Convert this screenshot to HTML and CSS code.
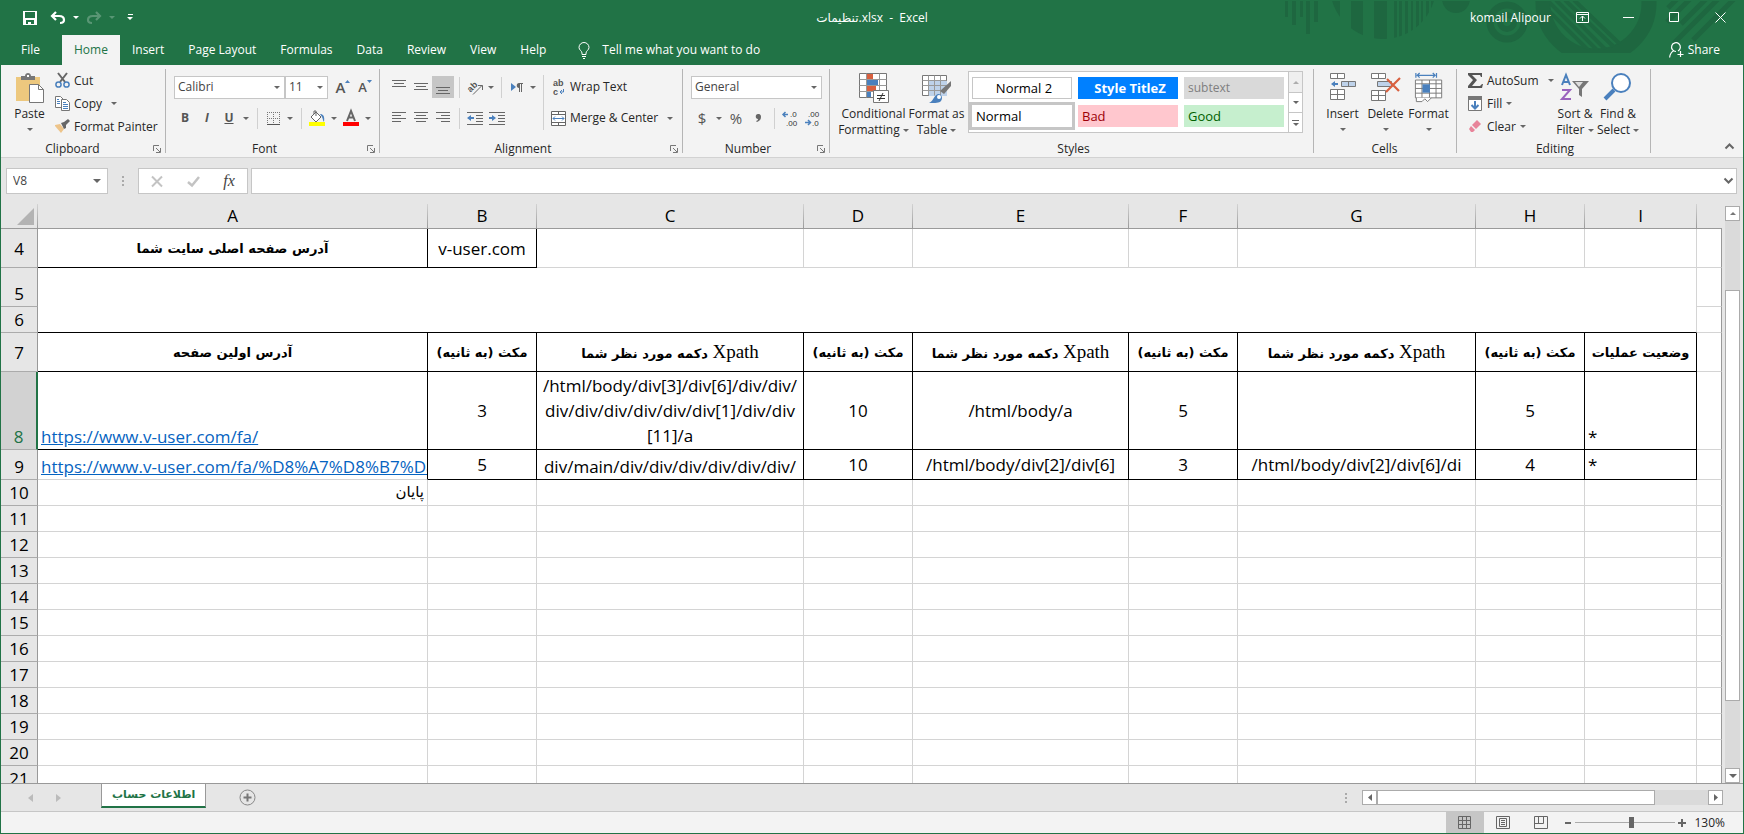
FILE: index.html
```
<!DOCTYPE html>
<html lang="en">

<head>
    <meta charset="UTF-8">
    <meta name="viewport" content="width=device-width, initial-scale=1.0">
    <title>تنظیمات.xlsx - Excel</title>
    <link rel="stylesheet" href="styles.css">
</head>

<body>
    <header class="top">
        <!-- Decorative pattern behind the window buttons -->
        <svg class="pattern" width="474" height="65" viewBox="0 0 474 65">
            <defs>
                <clipPath id="disc"><circle cx="113" cy="-14" r="53"/></clipPath>
                <clipPath id="bowl"><circle cx="326" cy="3" r="47"/></clipPath>
                <clipPath id="cut"><rect y="1" width="474" height="52"/></clipPath>
            </defs>
            <g clip-path="url(#cut)">
                <path d="M15 1h3v16h-3zM22 1h4v24h-4zM30 1h3v16h-3zM36 1h4v33h-4zM44 1h4v21h-4z"/>
                <path clip-path="url(#disc)" d="M56 0h14v40H56zM81 0h12v40H81zM104 0h13v40h-13zM124 0h3v40h-3zM129 0h3v40h-3zM135 0h3v40h-3zM141 0h2v40h-2zM146 0h3v40h-3zM151 0h2v40h-2zM156 0h3v40h-3zM161 0h3v40h-3z"/>
                <circle cx="186" cy="-1" r="14"/>
                <circle class="ring" cx="237" cy="22" r="17" stroke-width="7"/>
                <circle class="ring" cx="237" cy="22" r="7" stroke-width="6"/>
                <circle class="ring" cx="326" cy="3" r="53" stroke-width="15"/>
                <g clip-path="url(#bowl)" class="ring" stroke-width="4">
                    <path d="M268 0l60 60M277 0l60 60M286 0l56 56M295 0l52 50M304 0l50 48"/>
                </g>
                <path class="ring" stroke-width="5" d="M398 8l9-9M397 22l23-23M411 24l25-25M404 43l44-44M423 40l42-42"/>
            </g>
        </svg>

        <div class="titlebar">
            <div class="quick">
                <button class="qbtn" aria-label="Save"><svg width="14" height="14" viewBox="0 0 14 14"><path fill="#fff" fill-rule="evenodd" d="M0 0h14v14H0zM2 1v6h10V1zM3 9v4h2v-2h3v2h3V9z"/></svg></button>
                <button class="qbtn" aria-label="Undo"><svg width="16" height="13" viewBox="0 0 16 13"><path fill="none" stroke="#fff" stroke-width="2.200" d="M6 1L2 5l4 4M2 5h7c4 0 5 2 5 4s-2 3-4 3"/></svg></button>
                <button class="qcaret" aria-label="Undo list"><i class="caret white"></i></button>
                <button class="qbtn dim" aria-label="Redo"><svg width="16" height="13" viewBox="0 0 16 13"><path fill="none" stroke="#fff" stroke-width="2.200" d="M10 1l4 4-4 4M14 5H7C3 5 2 7 2 9s2 3 4 3"/></svg></button>
                <button class="qcaret dim" aria-label="Redo list"><i class="caret white"></i></button>
                <button class="qbtn" aria-label="Customize toolbar"><svg width="7" height="7" viewBox="0 0 7 7"><path fill="#fff" d="M1 0h5v1H1zM0 3h6L3 6z"/></svg></button>
            </div>
            <div class="doc-title">تنظیمات.xlsx&nbsp; -&nbsp; Excel</div>
            <div class="window">
                <span class="user">komail Alipour</span>
                <button aria-label="Ribbon display options"><svg width="13" height="11" viewBox="0 0 13 11"><path fill="none" stroke="#fff" d="M.5.5h12v10H.5zM.5 2.500h12M6.500 9V4M4 6.500L6.500 4 9 6.500"/></svg></button>
                <button aria-label="Minimize"><svg width="11" height="11" viewBox="0 0 11 11"><path stroke="#fff" d="M0 5.500h11"/></svg></button>
                <button aria-label="Maximize"><svg width="11" height="11" viewBox="0 0 11 11"><path fill="none" stroke="#fff" d="M.5.5h9v9h-9z"/></svg></button>
                <button aria-label="Close"><svg width="11" height="11" viewBox="0 0 11 11"><path stroke="#fff" d="M.5.5l10 10M10.500.5l-10 10"/></svg></button>
            </div>
        </div>

        <nav class="tabs">
            <button class="file">File</button>
            <button class="active">Home</button>
            <button>Insert</button>
            <button>Page Layout</button>
            <button>Formulas</button>
            <button>Data</button>
            <button>Review</button>
            <button>View</button>
            <button>Help</button>
            <button class="tell"><svg width="12" height="17" viewBox="0 0 12 17"><path fill="none" stroke="#fff" d="M4 12.500V11C4 9 1 8 1 5.500a5 5 0 0 1 10 0C11 8 8 9 8 11v1.500zM4 14.500h4M5 16.500h2"/></svg>Tell me what you want to do</button>
            <button class="share"><svg width="15" height="16" viewBox="0 0 15 16"><path fill="none" stroke="#fff" stroke-width="1.200" d="M7 9.500a4.400 4.400 0 1 1 2-.5M5 8.500C2 10 1 12 .6 15.500M11.500 9v6M8.500 12.500h6"/></svg>Share</button>
        </nav>
    </header>

    <div class="ribbon">
        <section class="group clipboard">
            <div class="body">
                <button class="big">
                    <svg width="30" height="30" viewBox="0 0 30 30"><path fill="#edc87e" d="M1 4h24v24H1z"/><path fill="#777" d="M6 3h4c0-4 6-4 6 0h4v4H6z"/><path fill="#fff" d="M12 2h2v2h-2z"/><path fill="#fff" stroke="#777" d="M14.500 11.500h9l5 5v13h-14z"/><path fill="none" stroke="#777" d="M23.500 11.500v5h5"/></svg>
                    <span>Paste</span><i class="caret"></i>
                </button>
                <div class="stack">
                    <button><svg width="15" height="15" viewBox="0 0 15 15"><path stroke="#666" stroke-width="2" d="M3 0l7 9M12 0L5 9"/><g fill="none" stroke="#4a80bd" stroke-width="1.500"><circle cx="3.500" cy="11.500" r="2.600"/><circle cx="11.500" cy="11.500" r="2.600"/></g></svg>Cut</button>
                    <button><svg width="15" height="15" viewBox="0 0 15 15"><path fill="#fff" stroke="#777" d="M.5.500h5l3 3v8h-8z"/><path fill="#fff" stroke="#777" d="M6.500 3.500h5l3 3v8h-8z"/><path stroke="#4a80bd" d="M2 3.500h2M2 5.500h3M2 7.500h3M8 6.500h3M8 8.500h5M8 10.500h5M8 12.500h5"/></svg>Copy<i class="caret far"></i></button>
                    <button><svg width="15" height="15" viewBox="0 0 15 15"><path fill="#edc48a" d="M0 6l5-1 4 5-3 4-6-7z"/><path fill="#666" d="M6 4l3-1 4-3 2 2-4 4v3l-2 1z"/></svg>Format Painter</button>
                </div>
            </div>
            <div class="caption"><span>Clipboard</span><button class="launch" aria-label="Clipboard options"><svg width="8" height="8" viewBox="0 0 8 8"><path fill="none" stroke="#777" d="M.5 6V.5H6M3 3l4 4M7.500 3v4.500H3"/></svg></button></div>
        </section>

        <section class="group font">
            <div class="body rows">
                <div class="line">
                    <div class="combo name"><select aria-label="Font"><option>Calibri</option></select><i class="caret"></i></div>
                    <div class="combo size"><select aria-label="Font size"><option>11</option></select><i class="caret"></i></div>
                    <button class="tool" aria-label="Increase font size"><span class="big-a">A</span><svg class="tip" width="5" height="10" viewBox="0 0 5 10"><path fill="#4a80bd" d="M0 3h5L2.500 0z"/></svg></button>
                    <button class="tool" aria-label="Decrease font size"><span class="small-a">A</span><svg class="tip" width="5" height="10" viewBox="0 0 5 10"><path fill="#4a80bd" d="M0 0h5L2.500 3z"/></svg></button>
                </div>
                <div class="line">
                    <button class="tool"><b>B</b></button>
                    <button class="tool"><b><em>I</em></b></button>
                    <button class="tool"><b><u>U</u></b></button>
                    <button class="drop" aria-label="Underline styles"><i class="caret"></i></button>
                    <span class="sep"></span>
                    <button class="tool" aria-label="Borders"><svg width="13" height="13" viewBox="0 0 13 13"><path fill="none" stroke="#777" stroke-dasharray="1 1" d="M0 .5h13M.5 0v12M12.500 0v12M6.500 0v12M0 6.500h13"/><path stroke="#555" d="M0 12.500h13"/></svg></button>
                    <button class="drop" aria-label="Border styles"><i class="caret"></i></button>
                    <span class="sep"></span>
                    <button class="tool" aria-label="Fill color"><svg width="16" height="16" viewBox="0 0 16 16"><path fill="#fff" stroke="#666" d="M7 2l5 5-5 5-5-5zM7 6V1H5v3"/><path fill="#4a80bd" d="M11 4c3 0 5 2 4 8-1-1-1-3-2-5z"/><path fill="#ff0" d="M0 12h16v4H0z"/></svg></button>
                    <button class="drop" aria-label="Fill colors"><i class="caret"></i></button>
                    <button class="tool" aria-label="Font color"><svg width="16" height="16" viewBox="0 0 16 16"><path fill="none" stroke="#666" stroke-width="2" d="M4 11L8 1l4 10M5.500 7.500h5"/><path fill="red" d="M0 12h16v4H0z"/></svg></button>
                    <button class="drop" aria-label="Font colors"><i class="caret"></i></button>
                </div>
            </div>
            <div class="caption"><span>Font</span><button class="launch" aria-label="Font options"><svg width="8" height="8" viewBox="0 0 8 8"><path fill="none" stroke="#777" d="M.5 6V.5H6M3 3l4 4M7.500 3v4.500H3"/></svg></button></div>
        </section>

        <section class="group align">
            <div class="body">
                <div class="rows">
                    <div class="line">
                        <button class="tool" aria-label="Top align"><svg width="14" height="14" viewBox="0 0 14 14"><path stroke="#666" d="M0 .5h14M2 3.500h10M0 6.500h14"/></svg></button>
                        <button class="tool" aria-label="Middle align"><svg width="14" height="14" viewBox="0 0 14 14"><path stroke="#666" d="M0 3.500h14M2 6.500h10M0 9.500h14"/></svg></button>
                        <button class="tool on" aria-label="Bottom align"><svg width="14" height="14" viewBox="0 0 14 14"><path stroke="#666" d="M0 7.500h14M2 10.500h10M0 13.500h14"/></svg></button>
                        <span class="sep"></span>
                        <button class="tool" aria-label="Orientation"><svg width="17" height="17" viewBox="0 0 17 17"><text class="glyph" x="0" y="11" transform="rotate(-45 5 8)">ab</text><path fill="none" stroke="#666" d="M6 15.500l9-9M11 6.500h4.500V11"/></svg></button>
                        <button class="drop" aria-label="Orientation list"><i class="caret"></i></button>
                        <span class="sep"></span>
                        <button class="tool" aria-label="Text direction"><svg width="13" height="9" viewBox="0 0 13 9"><path fill="#4a80bd" d="M0 0l5 4-5 4z"/><path fill="#666" d="M12 0v1h-1v8h-1V1H9v8H8V5C5 5 5 0 8 0z"/></svg></button>
                        <button class="drop" aria-label="Text direction list"><i class="caret"></i></button>
                    </div>
                    <div class="line">
                        <button class="tool" aria-label="Align left"><svg width="14" height="12" viewBox="0 0 14 12"><path stroke="#666" d="M0 .5h14M0 3.500h9M0 6.500h14M0 9.500h9"/></svg></button>
                        <button class="tool" aria-label="Center"><svg width="14" height="12" viewBox="0 0 14 12"><path stroke="#666" d="M0 .5h14M2 3.500h10M0 6.500h14M2 9.500h10"/></svg></button>
                        <button class="tool" aria-label="Align right"><svg width="14" height="12" viewBox="0 0 14 12"><path stroke="#666" d="M0 .5h14M5 3.500h9M0 6.500h14M5 9.500h9"/></svg></button>
                        <span class="sep"></span>
                        <button class="tool" aria-label="Decrease indent"><svg width="16" height="13" viewBox="0 0 16 13"><path stroke="#666" d="M0 .5h16M9 3.500h7M9 6.500h7M9 9.500h7M0 12.500h16"/><path fill="#4a80bd" d="M0 6l4-3v2h3v2H4v2z"/></svg></button>
                        <button class="tool" aria-label="Increase indent"><svg width="16" height="13" viewBox="0 0 16 13"><path stroke="#666" d="M0 .5h16M9 3.500h7M9 6.500h7M9 9.500h7M0 12.500h16"/><path fill="#4a80bd" d="M7 6L3 3v2H0v2h3v2z"/></svg></button>
                    </div>
                </div>
                <span class="sep tall"></span>
                <div class="rows labelled">
                    <button class="line"><svg width="15" height="20" viewBox="0 0 15 20"><text class="glyph" x="2" y="9">ab</text><text class="glyph" x="2" y="18">c</text><path fill="none" stroke="#4a80bd" d="M12.500 12v3H9M11 13l-2 2 2 2"/></svg>Wrap Text</button>
                    <button class="line"><svg width="15" height="15" viewBox="0 0 15 15"><path fill="#fff" stroke="#666" d="M.5.5h14v14H.5zM.5 3.500h14M.5 11.500h14M7.500.5v3M7.500 11.500v3"/><path fill="none" stroke="#4a80bd" d="M2 7.500h11M4 5.500l-2 2 2 2M11 5.500l2 2-2 2"/></svg>Merge &amp; Center<i class="caret far"></i></button>
                </div>
            </div>
            <div class="caption"><span>Alignment</span><button class="launch" aria-label="Alignment options"><svg width="8" height="8" viewBox="0 0 8 8"><path fill="none" stroke="#777" d="M.5 6V.5H6M3 3l4 4M7.500 3v4.500H3"/></svg></button></div>
        </section>

        <section class="group number">
            <div class="body rows">
                <div class="line"><div class="combo format"><select aria-label="Number format"><option>General</option></select><i class="caret"></i></div></div>
                <div class="line">
                    <button class="tool sym">$</button>
                    <button class="drop" aria-label="Currencies"><i class="caret"></i></button>
                    <button class="tool sym">%</button>
                    <button class="tool sym" aria-label="Comma style"><svg width="5" height="8" viewBox="0 0 5 8"><path fill="#666" d="M2 0c3 0 3 2 3 3 0 3-2 4-4 5l-1-1c1 0 2-1 2-2-3 0-3-5 0-5z"/></svg></button>
                    <span class="sep"></span>
                    <button class="tool" aria-label="Increase decimal"><svg width="16" height="19" viewBox="0 0 16 19"><text class="dec" x="8" y="8">.0</text><text class="dec" x="4" y="17">.00</text><path fill="none" stroke="#4a80bd" stroke-width="1.500" d="M6 5.500H1M3.500 3L1 5.500 3.500 8"/></svg></button>
                    <button class="tool" aria-label="Decrease decimal"><svg width="16" height="19" viewBox="0 0 16 19"><text class="dec" x="4" y="8">.00</text><text class="dec" x="8" y="17">.0</text><path fill="none" stroke="#4a80bd" stroke-width="1.500" d="M1 13.500h5M4 11l2.500 2.500L4 16"/></svg></button>
                </div>
            </div>
            <div class="caption"><span>Number</span><button class="launch" aria-label="Number options"><svg width="8" height="8" viewBox="0 0 8 8"><path fill="none" stroke="#777" d="M.5 6V.5H6M3 3l4 4M7.500 3v4.500H3"/></svg></button></div>
        </section>

        <section class="group styles">
            <div class="body">
                <button class="big wide">
                    <svg width="30" height="30" viewBox="0 0 30 30"><path fill="#fff" stroke="#777" d="M.5.5h27v24H.5z"/><path fill="#d9603f" d="M8 1h6v5H8zM8 13h9v5H8z"/><path fill="#4a80bd" d="M8 7h11v5H8zM8 19h4v5H8z"/><path fill="none" stroke="#999" d="M7.500.5v24M20.500.5v24M.5 6.500h27M.5 12.500h27M.5 18.500h27"/><path fill="#fff" stroke="#777" d="M14.500 17.500h15v12h-15z"/><path stroke="#333" d="M18 22.500h8M18 25.500h8M24 20l-4 8"/></svg>
                    <span>Conditional</span><span>Formatting <i class="caret"></i></span>
                </button>
                <button class="big wide">
                    <svg width="30" height="30" viewBox="0 0 30 30"><path fill="#fff" stroke="#777" d="M.5 2.500h24v20H.5z"/><path fill="#bed2ea" d="M7 8h18v15H7z"/><path fill="none" stroke="#999" d="M6.500 2.500v20M12.500 2.500v20M18.500 2.500v20M.5 7.500h24M.5 12.500h24M.5 17.500h24"/><path fill="#777" d="M29 8v5l-7 8-4-3z"/><path fill="#4a80bd" d="M7 30c4-1 5-8 9-9 4 0 5 4 3 7-2 2-5 2-12 2z"/><circle cx="17" cy="24" r="2" fill="#fff"/></svg>
                    <span>Format as</span><span>Table <i class="caret"></i></span>
                </button>
                <div class="gallery">
                    <div class="swatches">
                        <button class="normal2">Normal 2</button>
                        <button class="titlez">Style TitleZ</button>
                        <button class="subtext">subtext</button>
                        <button class="normal">Normal</button>
                        <button class="bad">Bad</button>
                        <button class="good">Good</button>
                    </div>
                    <div class="gscroll">
                        <button class="off" aria-label="Previous styles"><i class="caret up"></i></button>
                        <button aria-label="Next styles"><i class="caret"></i></button>
                        <button class="more" aria-label="More styles"><i class="caret"></i></button>
                    </div>
                </div>
            </div>
            <div class="caption"><span>Styles</span></div>
        </section>

        <section class="group cells">
            <div class="body">
                <button class="big">
                    <svg width="30" height="30" viewBox="0 0 30 30"><path fill="#fff" stroke="#777" d="M2.500.5h14v5h-14zM9.500.5v5M2.500 16.500h14v10h-14zM9.500 16.500v10M2.500 21.500h14"/><path fill="#bed2ea" stroke="#777" d="M13.500 8.500h14v5h-14zM20.500 8.500v5"/><path fill="#4a80bd" d="M3 11l4-3v2h3v2H7v2z"/></svg>
                    <span>Insert</span><i class="caret"></i>
                </button>
                <button class="big">
                    <svg width="30" height="30" viewBox="0 0 30 30"><path fill="#fff" stroke="#777" d="M.5.5h14v5H.5zM7.500.5v5M.5 17.500h14v10H.5zM7.500 17.500v10M.5 22.500h14"/><path fill="#bed2ea" stroke="#777" d="M6.500 8.500h14v5h-14z"/><path stroke="#d9603f" stroke-width="2.200" d="M16 6l12 12M29 5L15 19"/></svg>
                    <span>Delete</span><i class="caret"></i>
                </button>
                <button class="big">
                    <svg width="30" height="32" viewBox="0 0 30 32"><path fill="none" stroke="#4a80bd" stroke-width="1.300" d="M1 0v5M23 0v5M2 2.500h20M5 0L2.500 2.500 5 5M19 0l2.500 2.500L19 5"/><path fill="#fff" stroke="#777" d="M.5 7.500h28v19H.5zM.5 11.500h28M.5 21.500h28M7.500 7.500v19M15.500 7.500v19M22.500 7.500v19M.5 16.500h28"/><path fill="#4a80bd" d="M8 12h8v9H8z"/><path fill="#fff" stroke="#777" d="M1.500 26.500v4h6l3-3 3 3 4-4"/></svg>
                    <span>Format</span><i class="caret"></i>
                </button>
            </div>
            <div class="caption"><span>Cells</span></div>
        </section>

        <section class="group editing">
            <div class="body">
                <div class="stack">
                    <button><svg width="15" height="15" viewBox="0 0 15 15"><path fill="#555" d="M0 0h14v4h-1l-1-2H4l5 5-5 6h8l2-2h1l-1 4H0v-2l5-6-5-5z"/></svg>AutoSum<i class="caret far"></i></button>
                    <button><svg width="15" height="15" viewBox="0 0 15 15"><path fill="#fff" stroke="#777" d="M.5.5h13v14H.5z"/><path fill="#777" d="M0 0h14v4H0z"/><path fill="none" stroke="#4a80bd" stroke-width="2" d="M7 5v8M3.500 9L7 12.500 10.500 9"/></svg>Fill <i class="caret"></i></button>
                    <button><svg width="15" height="15" viewBox="0 0 15 15"><path fill="#e8849a" d="M9 1l4 4-5 5-4-4z"/><path fill="#e8849a" d="M3 7l4 4-2 2H3l-2-3z"/></svg>Clear <i class="caret"></i></button>
                </div>
                <button class="big">
                    <svg width="30" height="30" viewBox="0 0 30 30"><path fill="none" stroke="#4a80bd" stroke-width="2" d="M2 12L6 2l4 10M3.500 9h6"/><path fill="none" stroke="#9a62bd" stroke-width="2" d="M2 17h8L2 26h9"/><path fill="#777" d="M12 8h17l-7 8v8l-3-2v-6z"/><path fill="#ddd" d="M15 9h8l-4 5z"/></svg>
                    <span>Sort &amp;</span><span>Filter <i class="caret"></i></span>
                </button>
                <button class="big">
                    <svg width="30" height="30" viewBox="0 0 30 30"><circle cx="18" cy="10" r="9" fill="#fff" stroke="#4a80bd" stroke-width="2"/><path stroke="#4a80bd" stroke-width="4" d="M11 17L2 26"/></svg>
                    <span>Find &amp;</span><span>Select <i class="caret"></i></span>
                </button>
            </div>
            <div class="caption"><span>Editing</span></div>
        </section>
        <button class="collapse" aria-label="Collapse the ribbon"><svg width="9" height="6" viewBox="0 0 9 6"><path fill="none" stroke="#666" stroke-width="2" d="M.5 5.500l4-4 4 4"/></svg></button>
    </div>

    <div class="formula-bar">
        <div class="name-box"><input type="text" value="V8" aria-label="Name box"><i class="caret large"></i></div>
        <span class="grip"></span>
        <div class="fx">
            <button aria-label="Cancel"><svg width="12" height="11" viewBox="0 0 12 11"><path stroke="#c3c3c3" stroke-width="2" d="M1 .5l10 10M11 .5l-10 10"/></svg></button>
            <button aria-label="Enter"><svg width="13" height="11" viewBox="0 0 13 11"><path fill="none" stroke="#c3c3c3" stroke-width="2.500" d="M1 6l4 3.500L12 1"/></svg></button>
            <button class="fn"><em>fx</em></button>
        </div>
        <div class="formula"><input type="text" aria-label="Formula"><svg width="9" height="6" viewBox="0 0 9 6"><path fill="none" stroke="#666" stroke-width="2" d="M.5.5l4 4 4-4"/></svg></div>
    </div>

    <main class="workspace">
        <div class="sheet">
            <table>
                <colgroup>
                    <col class="c-head"><col class="c-a"><col class="c-s"><col class="c-c"><col class="c-s"><col class="c-e"><col class="c-s"><col class="c-g"><col class="c-s"><col class="c-i"><col>
                </colgroup>
                <thead>
                    <tr><th class="corner"><svg width="17" height="17" viewBox="0 0 17 17"><path fill="#b3b3b3" d="M17 0v17H0z"/></svg></th><th>A</th><th>B</th><th>C</th><th>D</th><th>E</th><th>F</th><th>G</th><th>H</th><th>I</th><th></th></tr>
                </thead>
                <tbody>
                    <tr class="h39"><th>4</th><td class="box fa">آدرس صفحه اصلی سایت شما</td><td class="box">v-user.com</td><td></td><td></td><td></td><td></td><td></td><td></td><td></td><td></td></tr>
                    <tr class="h39"><th class="low">5</th><td class="merged" colspan="9" rowspan="2"></td><td></td></tr>
                    <tr><th>6</th><td></td></tr>
                    <tr class="h39"><th>7</th><td class="box fa">آدرس اولین صفحه</td><td class="box fa">مکث (به ثانیه)</td><td class="box fa"><span class="serif">Xpath</span> دکمه مورد نظر شما</td><td class="box fa">مکث (به ثانیه)</td><td class="box fa"><span class="serif">Xpath</span> دکمه مورد نظر شما</td><td class="box fa">مکث (به ثانیه)</td><td class="box fa"><span class="serif">Xpath</span> دکمه مورد نظر شما</td><td class="box fa">مکث (به ثانیه)</td><td class="box fa">وضعیت عملیات</td><td></td></tr>
                    <tr class="h78"><th class="low current">8</th><td class="box low start"><a href="#">https://www.v-user.com/fa/</a></td><td class="box">3</td><td class="box">/html/body/div[3]/div[6]/div/div/<br>div/div/div/div/div/div[1]/div/div<br>[11]/a</td><td class="box">10</td><td class="box">/html/body/a</td><td class="box">5</td><td class="box"></td><td class="box">5</td><td class="box low start">*</td><td></td></tr>
                    <tr class="h30"><th class="low">9</th><td class="side low start"><a href="#">https://www.v-user.com/fa/%D8%A7%D8%B7%D8</a></td><td class="box">5</td><td class="box low">div/main/div/div/div/div/div/div/</td><td class="box">10</td><td class="box">/html/body/div[2]/div[6]</td><td class="box">3</td><td class="box">/html/body/div[2]/div[6]/di</td><td class="box">4</td><td class="box start">*</td><td></td></tr>
                    <tr><th>10</th><td class="fa-end">پایان</td><td></td><td></td><td></td><td></td><td></td><td></td><td></td><td></td><td></td></tr>
                    <tr><th>11</th><td></td><td></td><td></td><td></td><td></td><td></td><td></td><td></td><td></td><td></td></tr>
                    <tr><th>12</th><td></td><td></td><td></td><td></td><td></td><td></td><td></td><td></td><td></td><td></td></tr>
                    <tr><th>13</th><td></td><td></td><td></td><td></td><td></td><td></td><td></td><td></td><td></td><td></td></tr>
                    <tr><th>14</th><td></td><td></td><td></td><td></td><td></td><td></td><td></td><td></td><td></td><td></td></tr>
                    <tr><th>15</th><td></td><td></td><td></td><td></td><td></td><td></td><td></td><td></td><td></td><td></td></tr>
                    <tr><th>16</th><td></td><td></td><td></td><td></td><td></td><td></td><td></td><td></td><td></td><td></td></tr>
                    <tr><th>17</th><td></td><td></td><td></td><td></td><td></td><td></td><td></td><td></td><td></td><td></td></tr>
                    <tr><th>18</th><td></td><td></td><td></td><td></td><td></td><td></td><td></td><td></td><td></td><td></td></tr>
                    <tr><th>19</th><td></td><td></td><td></td><td></td><td></td><td></td><td></td><td></td><td></td><td></td></tr>
                    <tr><th>20</th><td></td><td></td><td></td><td></td><td></td><td></td><td></td><td></td><td></td><td></td></tr>
                    <tr><th>21</th><td></td><td></td><td></td><td></td><td></td><td></td><td></td><td></td><td></td><td></td></tr>
                </tbody>
            </table>
        </div>
        <div class="vscroll">
            <button aria-label="Scroll up"><i class="caret up"></i></button>
            <div class="track"><div class="thumb"></div></div>
            <button aria-label="Scroll down"><i class="caret large"></i></button>
        </div>
    </main>

    <div class="sheet-bar">
        <button class="nav" aria-label="Previous sheet"><svg width="5" height="8" viewBox="0 0 5 8"><path fill="#bbb" d="M5 0v8L0 4z"/></svg></button>
        <button class="nav" aria-label="Next sheet"><svg width="5" height="8" viewBox="0 0 5 8"><path fill="#bbb" d="M0 0v8l5-4z"/></svg></button>
        <button class="sheet-tab">اطلاعات حساب</button>
        <button class="add" aria-label="New sheet"><svg width="17" height="17" viewBox="0 0 17 17"><circle cx="8.500" cy="8.500" r="7.500" fill="none" stroke="#888"/><path stroke="#777" stroke-width="2" d="M4.500 8.500h8M8.500 4.500v8"/></svg></button>
        <span class="grip"></span>
        <div class="hscroll">
            <button aria-label="Scroll left"><svg width="4" height="7" viewBox="0 0 4 7"><path fill="#666" d="M4 0v7L0 3.500z"/></svg></button>
            <div class="track"><div class="thumb"></div></div>
            <button aria-label="Scroll right"><svg width="4" height="7" viewBox="0 0 4 7"><path fill="#666" d="M0 0v7l4-3.500z"/></svg></button>
        </div>
    </div>

    <footer class="status">
        <button class="view on" aria-label="Normal view"><svg width="14" height="13" viewBox="0 0 14 13"><path fill="none" stroke="#666" d="M.5.5h12v12H.5zM4.500.5v12M8.500.5v12M.5 4.500h12M.5 8.500h12"/></svg></button>
        <button class="view" aria-label="Page layout view"><svg width="14" height="13" viewBox="0 0 14 13"><path fill="none" stroke="#666" d="M.5.5h13v12H.5zM3.500 2.500h7v8h-7zM5 4.500h4M5 6.500h4M5 8.500h4"/></svg></button>
        <button class="view" aria-label="Page break view"><svg width="14" height="13" viewBox="0 0 14 13"><path fill="none" stroke="#666" d="M.5.5h13v12H.5zM4.500.5v7M9.500.5v7H.5"/></svg></button>
        <button class="zoom" aria-label="Zoom out"><svg width="8" height="8" viewBox="0 0 8 8"><path fill="#666" d="M1 3h6v2H1z"/></svg></button>
        <input type="range" min="10" max="210" value="122" aria-label="Zoom">
        <button class="zoom" aria-label="Zoom in"><svg width="8" height="8" viewBox="0 0 8 8"><path fill="#666" d="M0 3h3V0h2v3h3v2H5v3H3V5H0z"/></svg></button>
        <span class="percent">130%</span>
    </footer>
</body>

</html>
```
FILE: styles.css
```
* {
    box-sizing: border-box;
}

body {
    margin: 0;
    height: 100vh;
    display: flex;
    flex-direction: column;
    overflow: hidden;
    border: 1px solid #217346;
    border-top: none;
    background-color: #e6e6e6;
    font: 12px/16px "Open Sans", "Noto Sans", "DejaVu Sans", sans-serif;
    color: #262626;
}

button {
    display: flex;
    align-items: center;
    justify-content: center;
    padding: 0;
    border: none;
    background: none;
    font: inherit;
    color: inherit;
    white-space: nowrap;
}

input,
select {
    font: inherit;
    color: #444;
    border: none;
    background: none;
    padding: 0;
}

svg {
    flex: none;
    display: block;
    overflow: visible;
}

/* small drop-down arrow */
.caret {
    display: inline-block;
    flex: none;
    border: 3px solid transparent;
    border-top-color: #666;
    border-bottom: none;
    vertical-align: middle;
}

.caret.up {
    border-top: none;
    border-bottom: 3px solid #777;
}

.caret.white {
    border-top-color: #fff;
}

.caret.large {
    border-width: 4px 4px 0;
}

.caret.far {
    margin-left: 5px;
}

.grip {
    width: 2px;
    height: 10px;
    background: repeating-linear-gradient(#aaa 0 2px, transparent 2px 4px);
}

/* Title bar and tabs */
.top {
    position: relative;
    height: 65px;
    background-color: #217346;
    color: #fff;
}

.pattern {
    position: absolute;
    top: 0;
    right: -1px;
    fill: #1e6740;
    overflow: hidden;
}

.pattern .ring {
    fill: none;
    stroke: #1e6740;
}

.titlebar {
    position: relative;
    display: grid;
    grid-template-columns: 1fr auto 1fr;
    align-items: center;
    height: 35px;
}

.quick,
.window {
    display: flex;
    align-items: center;
}

.quick {
    padding-left: 15px;
}

.qbtn {
    width: 28px;
}

.qcaret {
    width: 8px;
}

.dim {
    opacity: 0.25;
}

.window {
    justify-content: flex-end;
}

.window button {
    width: 46px;
    height: 32px;
}

.user {
    margin-right: 8px;
}

.tabs {
    position: relative;
    display: flex;
    height: 30px;
}

.tabs button {
    padding: 0 12px;
}

.tabs .file {
    width: 61px;
    padding-right: 14px;
}

.tabs .active {
    background-color: #f3f3f3;
    color: #217346;
}

.tabs .tell {
    gap: 12px;
    padding-left: 20px;
}

.tabs .share {
    gap: 4px;
    margin-left: auto;
    padding-right: 23px;
}

/* Ribbon */
.ribbon {
    position: relative;
    display: flex;
    height: 93px;
    padding: 4px 0;
    background-color: #f3f3f3;
    border-bottom: 1px solid #d2d2d2;
}

.group {
    display: flex;
    flex-direction: column;
    height: 84px;
    border-right: 1px solid #b5b5b5;
}

.clipboard {
    width: 165px;
    padding-left: 3px;
}

.font {
    width: 214px;
    padding-left: 8px;
}

.align {
    width: 303px;
    padding-left: 8px;
}

.number {
    width: 147px;
    padding-left: 8px;
}

.styles {
    width: 484px;
    padding-left: 12px;
}

.cells {
    width: 143px;
    padding-left: 7px;
}

.editing {
    width: 194px;
    padding-left: 11px;
}

.body {
    display: flex;
    flex: 1;
}

.caption {
    display: flex;
    align-items: center;
    height: 8px;
}

.caption span {
    flex: 1;
    margin-left: -8px;
    text-align: center;
}

.launch {
    width: 16px;
}

.big {
    flex-direction: column;
    justify-content: flex-start;
    width: 43px;
    padding-top: 4px;
    height: 66px;
}

.big svg {
    height: 30px;
    margin-bottom: 3px;
}

.clipboard .big {
    width: 51px;
}

.big > .caret {
    margin-top: 6px;
}

.big.wide {
    width: 63px;
}

.stack button {
    justify-content: flex-start;
    gap: 4px;
    height: 23px;
}

.rows {
    display: flex;
    flex-direction: column;
    gap: 9px;
    padding-top: 7px;
}

.line {
    display: flex;
    flex: none;
    align-items: center;
    justify-content: flex-start;
    height: 22px;
}

.labelled .line {
    gap: 4px;
}

.tool {
    width: 22px;
    height: 22px;
    color: #555;
}

.tool.on {
    background-color: #c6c6c6;
}

.tool .tip {
    align-self: flex-start;
    margin-top: 4px;
}

.big-a,
.small-a {
    font-weight: 600;
    font-size: 15px;
}

.small-a {
    font-size: 13px;
}

.drop {
    width: 12px;
    height: 22px;
}

.align .drop {
    width: 10px;
}

.sep {
    width: 1px;
    height: 21px;
    margin: 0 4px 0 5px;
    background-color: #d0d0d0;
}

.sep.tall {
    height: 55px;
    margin: 6px 7px 0 5px;
}

.sym {
    font-size: 15px;
}

.glyph {
    font: bold 9px "Liberation Sans", sans-serif;
    fill: #555;
}

.dec {
    font: 8px "Liberation Sans", sans-serif;
    fill: #333;
}

.combo {
    position: relative;
    height: 23px;
    background-color: #fff;
    border: 1px solid #c6c6c6;
}

.combo select {
    appearance: none;
    display: block;
    width: 100%;
    height: 21px;
    padding: 0 3px;
}

.combo .caret {
    position: absolute;
    right: 4px;
    top: 9px;
}

.combo.name {
    width: 111px;
}

.combo.size {
    width: 43px;
    margin-right: 4px;
}

.combo.format {
    width: 131px;
}

.gallery {
    display: flex;
    height: 62px;
    margin-top: 2px;
    background-color: #fff;
    border: 1px solid #c6c6c6;
}

.swatches {
    display: grid;
    grid-template-columns: repeat(3, 100px);
    grid-auto-rows: 22px;
    gap: 6px;
    padding: 5px 4px 5px 3px;
}

.swatches button {
    justify-content: flex-start;
    padding-left: 4px;
    font-size: 13px;
    color: #000;
}

.swatches .normal2 {
    justify-content: center;
    border: 1px solid #c6c6c6;
}

.swatches .titlez {
    justify-content: center;
    background-color: #0080ff;
    color: #fff;
    font-weight: bold;
}

.swatches .subtext {
    background-color: #d9d9d9;
    color: #7f7f7f;
    font-size: 12px;
}

.swatches .normal {
    outline: 3px solid #c6c6c6;
}

.swatches .bad {
    background-color: #ffc7ce;
    color: #9c0006;
}

.swatches .good {
    background-color: #c6efce;
    color: #006100;
}

.gscroll {
    display: grid;
    grid-template-rows: 1fr 1fr 1fr;
    width: 14px;
    border-left: 1px solid #c6c6c6;
}

.gscroll button + button {
    border-top: 1px solid #c6c6c6;
}

.gscroll .off {
    background-color: #e6e6e6;
    opacity: 0.6;
}

.gscroll .more {
    flex-direction: column;
    gap: 2px;
}

.gscroll .more::before {
    content: "";
    width: 7px;
    height: 1px;
    background-color: #666;
}

.collapse {
    align-self: flex-end;
    margin: 0 9px 4px auto;
}

/* Formula bar */
.formula-bar {
    display: flex;
    align-items: center;
    height: 46px;
    padding: 0 6px 0 5px;
}

.name-box,
.fx,
.formula {
    display: flex;
    align-items: center;
    height: 26px;
    background-color: #fff;
    border: 1px solid #c6c6c6;
}

.name-box {
    width: 102px;
    padding: 0 6px;
}

.name-box input,
.formula input {
    flex: 1;
    min-width: 0;
}

.formula-bar .grip {
    margin: 0 14px;
}

.fx {
    width: 110px;
    margin-right: 3px;
}

.fx button {
    flex: 1;
}

.fx .fn {
    font: 16px/16px "Liberation Serif", serif;
    color: #444;
}

.formula {
    flex: 1;
    padding: 0 3px;
}

/* Worksheet */
.workspace {
    display: flex;
    flex: 1;
    min-height: 0;
    border-bottom: 1px solid #999;
}

.sheet {
    flex: 1;
    min-width: 0;
    overflow: hidden;
}

table {
    width: 100%;
    table-layout: fixed;
    border-collapse: separate;
    border-spacing: 0;
    font-size: 17px;
    line-height: 25px;
    color: #000;
}

.c-head { width: 37px; }
.c-a { width: 390px; }
.c-s { width: 109px; }
.c-c { width: 267px; }
.c-e { width: 216px; }
.c-g { width: 238px; }
.c-i { width: 112px; }

tr {
    height: 26px;
}

.h30 { height: 30px; }
.h39 { height: 39px; }
.h78 { height: 78px; }

th {
    padding: 0;
    background-color: #e6e6e6;
    border-right: 1px solid #999;
    border-bottom: 1px solid #ababab;
    font-weight: normal;
}

thead tr {
    height: 25px;
}

thead th {
    height: 25px;
    line-height: 24px;
    border-bottom-color: #999;
    border-right: 1px solid;
    border-image: linear-gradient(#d5d5d5, #999) 1;
}

thead th:last-child {
    border-right: none;
}

.corner svg {
    margin-left: 16px;
}

th.current {
    background-color: #d2d2d2;
    border-right: 2px solid #217346;
    color: #217346;
}

td {
    padding: 0;
    overflow: hidden;
    background-color: #fff;
    border-right: 1px solid #d4d4d4;
    border-bottom: 1px solid #d4d4d4;
    text-align: center;
    white-space: nowrap;
}

td:last-child {
    border-right-color: #999;
}

td.box,
td.side {
    border-right-color: #000;
}

td.box,
td.merged {
    border-bottom-color: #000;
}

.low {
    vertical-align: bottom;
}

.start {
    padding-left: 3px;
    text-align: left;
}

.start a {
    color: #0563c1;
}

.fa {
    direction: rtl;
    font: bold 13px/25px "DejaVu Sans", sans-serif;
}

.serif {
    font: 19px/25px "Liberation Serif", serif;
}

.fa-end {
    direction: rtl;
    padding-right: 3px;
    text-align: right;
    font: 15px/25px "DejaVu Sans", sans-serif;
}

/* direction rtl makes "start" the right edge */
td.fa-end {
    text-align: start;
}

/* Scroll bars */
.vscroll {
    display: flex;
    flex-direction: column;
    width: 21px;
    padding: 2px 3px 0;
}

.vscroll button,
.hscroll button {
    width: 15px;
    height: 15px;
    background-color: #fff;
    border: 1px solid #ababab;
}

.vscroll .track,
.hscroll .track {
    flex: 1;
    background-color: #dadada;
}

.vscroll .track {
    padding-top: 69px;
}

.thumb {
    background-color: #fff;
    border: 1px solid #ababab;
}

.vscroll .thumb {
    height: 86%;
}

/* Sheet tabs */
.sheet-bar {
    display: flex;
    align-items: center;
    height: 28px;
    border-bottom: 1px solid #c6c6c6;
}

.nav {
    width: 28px;
}

.nav:first-child {
    margin-left: 15px;
}

.sheet-tab {
    align-self: flex-start;
    height: 24px;
    margin: 0 33px 0 29px;
    padding: 0 10px;
    background-color: #fff;
    border: 1px solid #999;
    border-top: none;
    border-bottom: 2px solid #217346;
    font: bold 11px/16px "DejaVu Sans", sans-serif;
    color: #217346;
}

.sheet-bar .grip {
    margin: 0 15px 0 auto;
}

.hscroll {
    display: flex;
    width: 361px;
    margin-right: 20px;
}

.hscroll .thumb {
    width: 84%;
    height: 15px;
}

/* Status bar */
.status {
    display: flex;
    align-items: center;
    justify-content: flex-end;
    height: 21px;
    padding-right: 18px;
    background-color: #f3f3f3;
}

.view {
    width: 38px;
    height: 21px;
}

.view.on {
    background-color: #c6c6c6;
}

.zoom {
    width: 14px;
}

.status .view + .zoom {
    margin-left: 1px;
}

.status input {
    appearance: none;
    width: 100px;
    height: 12px;
    margin: 0;
    background: linear-gradient(#ababab, #ababab) center / 100% 1px no-repeat;
}

.status input::-webkit-slider-thumb {
    appearance: none;
    width: 5px;
    height: 11px;
    background-color: #666;
}

.percent {
    margin-left: 5px;
}
```
